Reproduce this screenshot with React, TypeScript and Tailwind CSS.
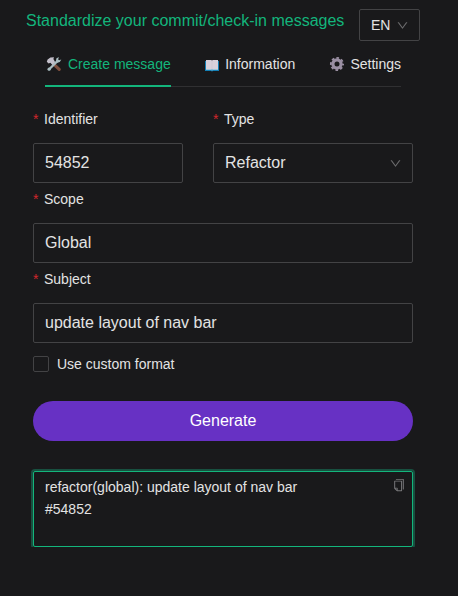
import type { ReactNode } from 'react';
import { AiOutlineCopy, AiOutlineDown } from 'react-icons/ai';

function ToolsIcon() {
  return (
    <svg width="16" height="16" viewBox="0 0 16 16" fill="none">
      <path d="M7.6 8.2 13.2 13.4" stroke="#7d4e3d" strokeWidth="3.2" strokeLinecap="round" />
      <path d="M3.2 13.2 11.6 4.9" stroke="#a9bcc0" strokeWidth="2.2" strokeLinecap="round" />
      <path d="M10 5.6 10.3 2.6 12.8 1 12.2 3.4 13 4.2 15.3 3.6 13.8 6 11.4 6.8Z" fill="#a9bcc0" />
      <path d="M.8 5.8 1.6 3.4 4.4 1.6 8 1.2 7.4 3 9.2 6.2 6.4 9 4.4 6.8 2.6 7.6Z" fill="#c3bfca" />
      <circle cx="3.1" cy="13.2" r="1.6" fill="#a9bcc0" />
    </svg>
  );
}

function BookIcon() {
  return (
    <svg width="16" height="16" viewBox="0 0 16 16" fill="none">
      <path d="M1 5H15V15H9L8 15.6 7 15H1Z" fill="#137fb5" />
      <path d="M2 4H7L8 4.4 9 4H14V13H9L8 13.6 7 13H2Z" fill="#d8d0da" />
      <path d="M2 13H7L8 13.6 9 13H14V14H9L8 14.6 7 14H2Z" fill="#9cc6dc" />
      <path d="M8 4.4V13.6" stroke="#c6c0cc" strokeWidth=".5" />
    </svg>
  );
}

function GearIcon() {
  return (
    <svg width="16" height="16" viewBox="0 0 16 16" fill="none" stroke="#9a8fa3">
      <circle cx="8" cy="8" r="4.1" strokeWidth="3.2" />
      <circle cx="8" cy="8" r="6.1" strokeWidth="1.9" strokeDasharray="2.6 2.19" strokeDashoffset="1.3" />
    </svg>
  );
}

function Label({ children }: { children: ReactNode }) {
  return (
    <div className="flex h-10 items-start text-sm leading-[22px]">
      <span className="mr-1 w-[7px] pt-[5px] text-[#d3262b]">*</span>
      <span className="pt-[5px]">{children}</span>
    </div>
  );
}

function Field({ value, children }: { value: string; children?: ReactNode }) {
  return (
    <div className="flex h-10 items-center justify-between rounded-[2px] border border-[#434345] px-[11px] text-base">
      <span>{value}</span>
      {children}
    </div>
  );
}

export default function App() {
  return (
    <main className="h-[596px] w-[458px] overflow-hidden bg-[#19191b] font-['Liberation_Sans',Arial,sans-serif] text-[#e3e3e3]">
      <header className="flex h-[45px] items-start pt-[9px] pl-[26px]">
        <h1 className="w-[333px] whitespace-nowrap text-base leading-[23px] text-[#13b57c]">
          Standardize your commit/check-in messages
        </h1>
        <button className="flex h-8 w-[61px] items-center justify-between rounded-[2px] border border-[#434345] pr-[10px] pl-[11px] text-sm">
          EN
          <AiOutlineDown size={13} color="#6b6b6d" />
        </button>
      </header>

      <nav className="ml-[45px] flex h-[42px] w-[356px] items-stretch justify-between border-b border-[#303032] text-sm leading-[38px]">
        <div className="-mb-px flex w-[126px] items-start gap-[6px] border-b-2 border-[#13b57c] whitespace-nowrap text-[#13b57c]">
          <span className="mt-[11px] ml-px"><ToolsIcon /></span>
          <span>Create message</span>
        </div>
        <div className="-ml-px flex gap-[5px]">
          <span className="mt-[11px]"><BookIcon /></span>
          <span>Information</span>
        </div>
        <div className="flex gap-[5px]">
          <span className="mt-[11px]"><GearIcon /></span>
          <span>Settings</span>
        </div>
      </nav>

      <section className="mx-[33px] mt-4 w-[380px]">
        <div className="flex gap-[30px]">
          <div className="w-[150px]">
            <Label>Identifier</Label>
            <Field value="54852" />
          </div>
          <div className="w-[200px]">
            <Label>Type</Label>
            <Field value="Refactor">
              <AiOutlineDown className="-mr-px" size={13} color="#6b6b6d" />
            </Field>
          </div>
        </div>
        <Label>Scope</Label>
        <Field value="Global" />
        <Label>Subject</Label>
        <Field value="update layout of nav bar" />
        <label className="mt-[10px] flex h-[22px] items-center gap-2 text-sm">
          <span className="size-4 rounded-[2px] border border-[#434345]" />
          Use custom format
        </label>
        <button className="mt-[26px] h-10 w-full rounded-full bg-[#6731c4] text-base text-white">Generate</button>
        <div className="-mx-[2px] mt-7 h-[78px] overflow-hidden px-[2px] pt-[2px]">
          <div className="flex h-[76px] justify-between rounded-[2px] border border-[#13b57c] px-[11px] py-1 text-sm leading-[22px] shadow-[0_0_0_2px_#185040]">
            <p className="whitespace-pre-line">{'refactor(global): update layout of nav bar\n#54852'}</p>
            <AiOutlineCopy className="mt-[2px] -mr-[5px]" size={14} color="#77777a" />
          </div>
        </div>
      </section>
    </main>
  );
}
